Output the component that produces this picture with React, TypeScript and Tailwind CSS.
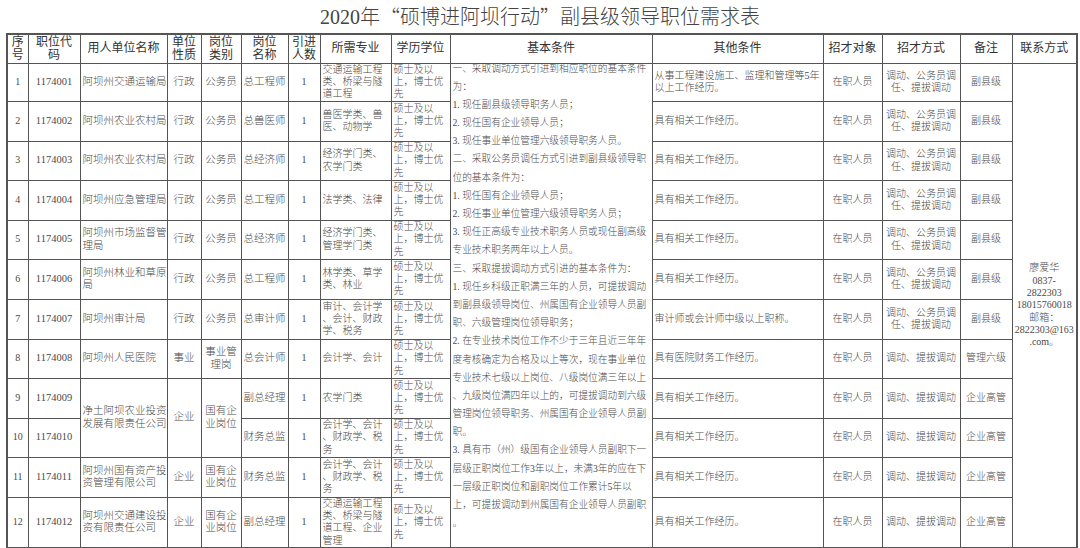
import React from "react";

type Row = {
  no: number;
  code: string;
  unit?: string[];
  unitSpan?: number;
  nature?: string;
  category?: string[];
  post: string;
  count: string;
  major: string[];
  edu: string[];
  other: string[];
  target: string;
  method: string[];
  note: string;
  h: string;
};

const edu = ["硕士及以", "上，博士优", "先"];
const diaoren = ["调动、公务员调", "任、提拔调动"];
const tiba = ["调动、提拔调动"];
const related = ["具有相关工作经历。"];

const rows: Row[] = [
  { no: 1, code: "1174001", unit: ["阿坝州交通运输局"], nature: "行政", category: ["公务员"], post: "总工程师", count: "1", major: ["交通运输工程", "类、桥梁与隧", "道工程"], edu, other: ["从事工程建设施工、监理和管理等5年", "以上工作经历。"], target: "在职人员", method: diaoren, note: "副县级", h: "h-[38px]" },
  { no: 2, code: "1174002", unit: ["阿坝州农业农村局"], nature: "行政", category: ["公务员"], post: "总兽医师", count: "1", major: ["兽医学类、兽", "医、动物学"], edu, other: related, target: "在职人员", method: diaoren, note: "副县级", h: "h-[40px]" },
  { no: 3, code: "1174003", unit: ["阿坝州农业农村局"], nature: "行政", category: ["公务员"], post: "总经济师", count: "1", major: ["经济学门类、", "农学门类"], edu, other: related, target: "在职人员", method: diaoren, note: "副县级", h: "h-[39px]" },
  { no: 4, code: "1174004", unit: ["阿坝州应急管理局"], nature: "行政", category: ["公务员"], post: "总工程师", count: "1", major: ["法学类、法律"], edu, other: related, target: "在职人员", method: diaoren, note: "副县级", h: "h-[40px]" },
  { no: 5, code: "1174005", unit: ["阿坝州市场监督管", "理局"], nature: "行政", category: ["公务员"], post: "总经济师", count: "1", major: ["经济学门类、", "管理学门类"], edu, other: related, target: "在职人员", method: diaoren, note: "副县级", h: "h-[39px]" },
  { no: 6, code: "1174006", unit: ["阿坝州林业和草原", "局"], nature: "行政", category: ["公务员"], post: "总工程师", count: "1", major: ["林学类、草学", "类、林业"], edu, other: related, target: "在职人员", method: diaoren, note: "副县级", h: "h-[40px]" },
  { no: 7, code: "1174007", unit: ["阿坝州审计局"], nature: "行政", category: ["公务员"], post: "总审计师", count: "1", major: ["审计、会计学", "、会计、财政", "学、税务"], edu, other: ["审计师或会计师中级以上职称。"], target: "在职人员", method: diaoren, note: "副县级", h: "h-[40px]" },
  { no: 8, code: "1174008", unit: ["阿坝州人民医院"], nature: "事业", category: ["事业管", "理岗"], post: "总会计师", count: "1", major: ["会计学、会计"], edu, other: ["具有医院财务工作经历。"], target: "在职人员", method: tiba, note: "管理六级", h: "h-[39px]" },
  { no: 9, code: "1174009", unit: ["净土阿坝农业投资", "发展有限责任公司"], unitSpan: 2, nature: "企业", category: ["国有企", "业岗位"], post: "副总经理", count: "1", major: ["农学门类"], edu, other: related, target: "在职人员", method: tiba, note: "企业高管", h: "h-[40px]" },
  { no: 10, code: "1174010", post: "财务总监", count: "1", major: ["会计学、会计", "、财政学、税", "务"], edu, other: related, target: "在职人员", method: tiba, note: "企业高管", h: "h-[39px]" },
  { no: 11, code: "1174011", unit: ["阿坝州国有资产投", "资管理有限公司"], nature: "企业", category: ["国有企", "业岗位"], post: "财务总监", count: "1", major: ["会计学、会计", "、财政学、税", "务"], edu, other: related, target: "在职人员", method: tiba, note: "企业高管", h: "h-[40px]" },
  { no: 12, code: "1174012", unit: ["阿坝州交通建设投", "资有限责任公司"], nature: "企业", category: ["国有企", "业岗位"], post: "副总经理", count: "1", major: ["交通运输工程", "类、桥梁与隧", "道工程、企业", "管理"], edu, other: related, target: "在职人员", method: tiba, note: "企业高管", h: "h-[49px]" },
];

const basic = [
  "一、采取调动方式引进到相应职位的基本条件",
  "为：",
  "1. 现任副县级领导职务人员；",
  "2. 现任国有企业领导人员；",
  "3. 现任事业单位管理六级领导职务人员。",
  "二、采取公务员调任方式引进到副县级领导职",
  "位的基本条件为：",
  "1. 现任国有企业领导人员；",
  "2. 现任事业单位管理六级领导职务人员；",
  "3. 现任正高级专业技术职务人员或现任副高级",
  "专业技术职务两年以上人员。",
  "三、采取提拔调动方式引进的基本条件为：",
  "1. 现任乡科级正职满三年的人员，可提拔调动",
  "到副县级领导岗位、州属国有企业领导人员副",
  "职、六级管理岗位领导职务；",
  "2. 在专业技术岗位工作不少于三年且近三年年",
  "度考核确定为合格及以上等次，现在事业单位",
  "专业技术七级以上岗位、八级岗位满三年以上",
  "、九级岗位满四年以上的，可提拔调动到六级",
  "管理岗位领导职务、州属国有企业领导人员副",
  "职。",
  "3. 具有市（州）级国有企业领导人员副职下一",
  "层级正职岗位工作3年以上，未满3年的应在下",
  "一层级正职岗位和副职岗位工作累计5年以",
  "上，可提拔调动到州属国有企业领导人员副职",
  "。",
];

const contact = ["廖爱华", "0837-", "2822303", "18015760018", "邮箱：", "2822303@163", ".com。"];

const widths = ["w-[21px]", "w-[52px]", "w-[87px]", "w-[34px]", "w-[40px]", "w-[47px]", "w-[32px]", "w-[71px]", "w-[59px]", "w-[202px]", "w-[171px]", "w-[59px]", "w-[78px]", "w-[52px]", "w-[65px]"];

const cjk = { fontFamily: '"Noto Sans CJK SC", sans-serif' };

function Lines({ items, line = "" }: { items: string[]; line?: string }) {
  return (
    <>
      {items.map((t, i) => (
        <div key={i} className={`whitespace-nowrap ${line}`}>{t}</div>
      ))}
    </>
  );
}

const td = "border border-[#555] p-0 align-middle";

export default function App() {
  const headers: string[][] = [
    ["序", "号"],
    ["职位代", "码"],
    ["用人单位名称"],
    ["单位", "性质"],
    ["岗位", "类别"],
    ["岗位", "名称"],
    ["引进", "人数"],
    ["所需专业"],
    ["学历学位"],
    ["基本条件"],
    ["其他条件"],
    ["招才对象"],
    ["招才方式"],
    ["备注"],
    ["联系方式"],
  ];

  return (
    <div
      lang="zh-CN"
      className="w-[1080px] h-[548px] bg-white overflow-hidden text-[#4a4a4a]"
      style={{ fontFamily: '"Liberation Serif", "Noto Sans CJK SC", serif' }}
    >
      <div className="h-[33px] flex items-center justify-center text-[20px] font-light text-[#444]">
        2020年<span style={cjk}>“</span>硕博进阿坝行动<span style={cjk}>”</span>副县级领导职位需求表
      </div>
      <table className="ml-[6px] w-[1070px] table-fixed border-collapse border-2 border-[#555]">
        <colgroup>
          {widths.map((w, i) => (
            <col key={i} className={w} />
          ))}
        </colgroup>
        <thead>
          <tr className="h-[29px]">
            {headers.map((h, i) => (
              <th key={i} className={`${td} text-center text-[12px] leading-[13px] font-normal text-[#333]`}>
                <Lines items={h} />
              </th>
            ))}
          </tr>
        </thead>
        <tbody className="text-[10px] leading-[12.4px] font-light">
          {rows.map((r, idx) => (
            <tr key={r.no} className={r.h}>
              <td className={`${td} text-center`}>{r.no}</td>
              <td className={`${td} text-center text-[10.5px]`}>{r.code}</td>
              {r.unit && (
                <td rowSpan={r.unitSpan} className={`${td} px-[2px] text-left text-[10.5px]`}>
                  <Lines items={r.unit} />
                </td>
              )}
              {r.nature && (
                <td rowSpan={r.unitSpan} className={`${td} text-center text-[10.5px]`}>{r.nature}</td>
              )}
              {r.category && (
                <td rowSpan={r.unitSpan} className={`${td} text-center text-[10.5px]`}>
                  <Lines items={r.category} />
                </td>
              )}
              <td className={`${td} text-center text-[10.5px]`}>{r.post}</td>
              <td className={`${td} text-center`}>{r.count}</td>
              <td className={`${td} px-[2px] text-left`}>
                <Lines items={r.major} line="h-[12.4px]" />
              </td>
              <td className={`${td} px-[2px] text-left`}>
                <Lines items={r.edu} line="h-[12.4px]" />
              </td>
              {idx === 0 && (
                <td rowSpan={12} className={`${td} pl-[2px] align-top text-left text-[9.7px] leading-[18.2px]`}>
                  <div className="-mt-[4px] h-[480px] overflow-hidden">
                    <Lines items={basic} line="h-[18.2px]" />
                  </div>
                </td>
              )}
              <td className={`${td} px-[2px] text-left`}>
                <Lines items={r.other} line="h-[12.4px]" />
              </td>
              <td className={`${td} text-center`}>{r.target}</td>
              <td className={`${td} text-center`}>
                <Lines items={r.method} line="h-[12.4px]" />
              </td>
              <td className={`${td} text-center`}>{r.note}</td>
              {idx === 0 && (
                <td rowSpan={12} className={`${td} text-center`}>
                  <Lines items={contact} line="h-[12.3px]" />
                </td>
              )}
            </tr>
          ))}
        </tbody>
      </table>
    </div>
  );
}
